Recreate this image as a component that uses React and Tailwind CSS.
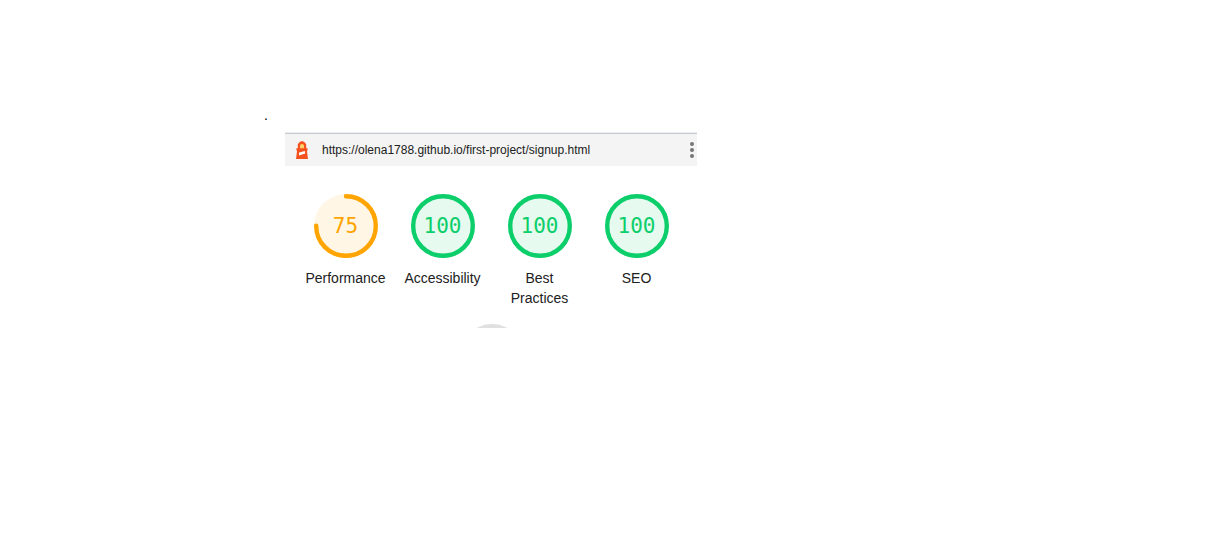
const SCORES = [
  { label: "Performance", score: 75 },
  { label: "Accessibility", score: 100 },
  { label: "Best Practices", score: 100 },
  { label: "SEO", score: 100 },
];

function Lighthouse() {
  return (
    <svg className="w-3 h-5 shrink-0" viewBox="0 0 12 20" aria-hidden="true">
      <path
        fill="#f4511e"
        d="M6 1Q8.6 1.6 10.2 4.2V8.2H11.6V10.4H10.9L12 19H0L1.1 10.4H.4V8.2H1.8V4.2Q3.4 1.6 6 1Z"
      />
      <path fill="#ffd36b" d="M4 5.2Q6 2.6 8 5.2V8.2H4Z" />
      <path fill="#fff" d="M3.2 12.6 8.8 11 9.2 13.6 2.9 15.6Z" />
    </svg>
  );
}

function Gauge({ label, score }) {
  const pass = score >= 90;
  const length = 2 * Math.PI * 29.8;
  return (
    <li className="flex flex-1 flex-col items-center">
      <div className="grid size-16 place-items-center">
        <svg className="col-start-1 row-start-1 size-16" viewBox="0 0 64 64" aria-hidden="true">
          <circle cx="32" cy="32" r="32" fill={pass ? "#e6faef" : "#fff6e6"} />
          <circle
            cx="32"
            cy="32"
            r="29.8"
            fill="none"
            stroke={pass ? "#0cce6b" : "#ffa400"}
            strokeWidth="4.4"
            strokeLinecap="round"
            strokeDasharray={`${(length * score) / 100} ${length}`}
            transform="rotate(-90 32 32)"
          />
        </svg>
        <span
          className={`col-start-1 row-start-1 font-['DejaVu_Sans_Mono',monospace] text-[21px] leading-6 ${
            pass ? "text-[#0cce6b]" : "text-[#ffa400]"
          }`}
        >
          {score}
        </span>
      </div>
      <span className="mt-2.5 px-1.5 text-center text-sm leading-5 text-[#212121]">{label}</span>
    </li>
  );
}

export default function App() {
  return (
    <main className="flex min-h-screen items-start bg-white pt-[103px] pl-[264px] font-['Liberation_Sans',Arial,sans-serif]">
      <p className="w-[21px] shrink-0 text-sm leading-6 text-black">.</p>
      <section className="mt-[29px] w-full max-w-[412px] overflow-hidden">
        <header className="flex h-[34px] items-center border-t border-t-[#eceef1] bg-[#f4f4f4] shadow-[inset_0_1px_0_#c6cad0]">
          <div className="flex flex-1 items-center gap-3.5 pl-[11px]">
            <Lighthouse />
            <a
              href="https://olena1788.github.io/first-project/signup.html"
              className="text-xs leading-4 text-[#212121]"
            >
              https://olena1788.github.io/first-project/signup.html
            </a>
          </div>
          <button type="button" aria-label="Tools menu" className="mr-[3px]">
            <svg className="h-4 w-1" viewBox="0 0 4 16" fill="#757575" aria-hidden="true">
              <circle cx="2" cy="2" r="2" />
              <circle cx="2" cy="8" r="2" />
              <circle cx="2" cy="14" r="2" />
            </svg>
          </button>
        </header>
        <ul className="flex px-3 pt-7">
          {SCORES.map((item) => (
            <Gauge key={item.label} {...item} />
          ))}
        </ul>
        <div className="mt-4 flex h-1 justify-center overflow-hidden pl-0.5">
          <div className="size-16 shrink-0 rounded-full bg-[#e0e0e0]" />
        </div>
      </section>
    </main>
  );
}
